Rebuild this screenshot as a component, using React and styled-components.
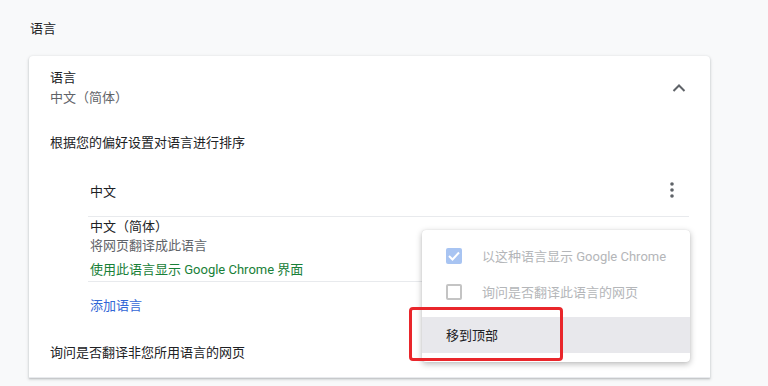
import React from "react";
import styled, { createGlobalStyle } from "styled-components";

const GlobalStyle = createGlobalStyle`
  body {
    margin: 0;
    background: #f8f9fa;
    font-family: Roboto, "Noto Sans CJK SC", sans-serif;
    font-size: 13px;
    color: #202124;
  }
`;

const Page = styled.div`
  width: 768px;
  height: 386px;
  overflow: hidden;
`;

const SectionTitle = styled.h2`
  margin: 0;
  height: 56px;
  padding: 0 0 2px 30px;
  box-sizing: border-box;
  display: flex;
  align-items: center;
  font-size: 13px;
  font-weight: 400;
  color: #202124;
`;

const Card = styled.div`
  position: relative;
  margin-left: 29px;
  width: 681px;
  background: #fff;
  border-radius: 4px 4px 0 0;
  box-shadow: 0 1px 2px rgba(60, 64, 67, 0.25), 0 1px 3px 1px rgba(60, 64, 67, 0.1);
`;

const HeaderRow = styled.div`
  display: flex;
  align-items: center;
  justify-content: space-between;
  height: 64px;
  padding: 0 21px 0 21px;
  box-sizing: border-box;
`;

const Lines = styled.div`
  display: flex;
  flex-direction: column;
  line-height: 21px;
  padding-bottom: 2px;
`;

const Secondary = styled.div`
  color: ${(p) => p.color || "#5f6368"};
  line-height: ${(p) => p.lh || "20px"};
`;

const IconButton = styled.div`
  width: 20px;
  height: 20px;
  display: flex;
  align-items: center;
  justify-content: center;
`;

const PlainRow = styled.div`
  height: ${(p) => p.h}px;
  display: flex;
  align-items: center;
  padding: 0 0 4px 21px;
  box-sizing: border-box;
`;

const LangList = styled.div`
  margin: 0 21px 0 59px;
`;

const LangItem = styled.div`
  display: flex;
  justify-content: space-between;
  align-items: ${(p) => (p.top ? "flex-start" : "center")};
  height: ${(p) => p.h}px;
  padding: 0 0 ${(p) => (p.top ? 0 : 2)}px 2px;
  border-bottom: 1px solid #e8eaed;
  box-sizing: border-box;
`;

const Details = styled.div`
  display: flex;
  flex-direction: column;
  line-height: 20px;
`;

const AddLink = styled.div`
  height: 47px;
  display: flex;
  align-items: center;
  padding: 0 0 2px 2px;
  box-sizing: border-box;
  color: #3367d6;
`;

const BottomRow = styled.div`
  height: 49px;
  display: flex;
  align-items: center;
  padding: 0 0 4px 21px;
  box-sizing: border-box;
  border-bottom: 1px solid #e8eaed;
`;

const Menu = styled.div`
  position: absolute;
  left: 393px;
  top: 174px;
  width: 268px;
  padding: 8px 0 9px;
  background: #fff;
  border-radius: 4px;
  box-shadow: 0 2px 6px rgba(0, 0, 0, 0.28), 0 0 1px rgba(0, 0, 0, 0.15);
`;

const MenuItem = styled.div`
  height: 36px;
  display: flex;
  align-items: center;
  gap: 20px;
  padding: 0 0 1px 24px;
  box-sizing: border-box;
  color: ${(p) => (p.disabled ? "#b4b6b9" : "#202124")};
  background: ${(p) => (p.active ? "#e8e8ec" : "transparent")};
  margin-top: ${(p) => (p.gap ? 7 : 0)}px;
`;

const Box = styled.span`
  width: 16px;
  height: 16px;
  box-sizing: border-box;
  border-radius: 2px;
  display: flex;
  align-items: center;
  justify-content: center;
  background: ${(p) => (p.checked ? "#a8c4f2" : "#fff")};
  border: ${(p) => (p.checked ? "none" : "2px solid #c4c4c4")};
`;

const Highlight = styled.div`
  position: absolute;
  left: 380px;
  top: 251px;
  width: 154px;
  height: 54px;
  box-sizing: border-box;
  border: 3px solid #e9262b;
  border-radius: 4px;
`;

const ChevronUp = () => (
  <svg width="14" height="10" viewBox="0 0 14 10">
    <path d="M1.5 8 L7 2.5 L12.5 8" fill="none" stroke="#5f6368" strokeWidth="2" />
  </svg>
);

const Kebab = () => (
  <svg width="4" height="16" viewBox="0 0 4 16">
    <circle cx="2" cy="2" r="1.8" fill="#5f6368" />
    <circle cx="2" cy="8" r="1.8" fill="#5f6368" />
    <circle cx="2" cy="14" r="1.8" fill="#5f6368" />
  </svg>
);

const Check = () => (
  <svg width="12" height="10" viewBox="0 0 12 10">
    <path d="M1 5 L4.5 8.5 L11 1.5" fill="none" stroke="#fff" strokeWidth="2" />
  </svg>
);

export default function App() {
  return (
    <Page>
      <GlobalStyle />
      <SectionTitle>语言</SectionTitle>
      <Card>
        <HeaderRow>
          <Lines>
            <div>语言</div>
            <Secondary>中文（简体）</Secondary>
          </Lines>
          <IconButton>
            <ChevronUp />
          </IconButton>
        </HeaderRow>
        <PlainRow h={46}>根据您的偏好设置对语言进行排序</PlainRow>
        <LangList>
          <LangItem h={51}>
            <span>中文</span>
            <IconButton style={{ marginRight: 7 }}>
              <Kebab />
            </IconButton>
          </LangItem>
          <LangItem h={65} top>
            <Details>
              <div>中文（简体）</div>
              <Secondary lh="18px">将网页翻译成此语言</Secondary>
              <Secondary color="#188038" style={{ marginTop: 5 }}>
                使用此语言显示 Google Chrome 界面
              </Secondary>
            </Details>
          </LangItem>
          <AddLink>添加语言</AddLink>
        </LangList>
        <BottomRow>询问是否翻译非您所用语言的网页</BottomRow>
        <Menu>
          <MenuItem disabled>
            <Box checked>
              <Check />
            </Box>
            以这种语言显示 Google Chrome
          </MenuItem>
          <MenuItem disabled>
            <Box />
            询问是否翻译此语言的网页
          </MenuItem>
          <MenuItem active gap>
            移到顶部
          </MenuItem>
        </Menu>
        <Highlight />
      </Card>
    </Page>
  );
}
